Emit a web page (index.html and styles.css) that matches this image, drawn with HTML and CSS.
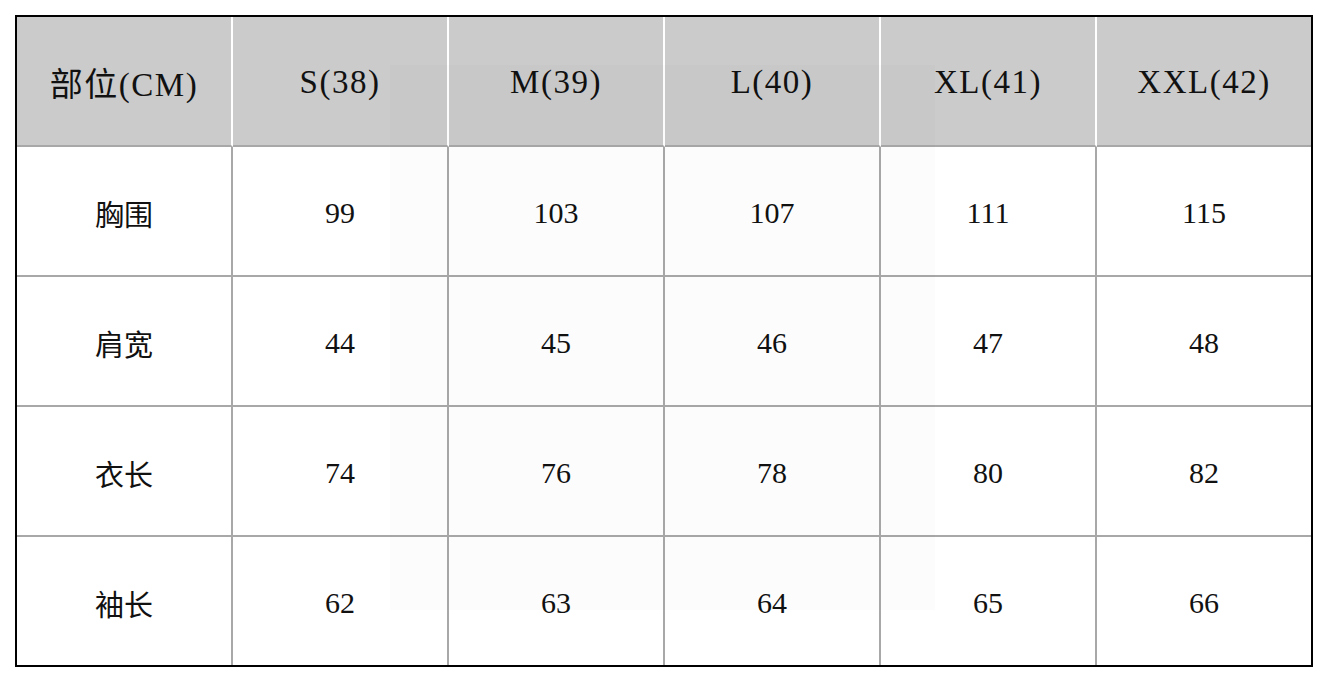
FILE: index.html
```html
<!DOCTYPE html>
<html lang="zh-CN">
<head>
<meta charset="utf-8">
<title>尺码表</title>
<link rel="stylesheet" href="styles.css">
</head>
<body>
<div class="sheet">
  <table class="size-table">
    <colgroup>
      <col class="c"><col class="c"><col class="c"><col class="c"><col class="c"><col class="c-last">
    </colgroup>
    <thead>
      <tr>
        <th>部位(CM)</th>
        <th>S(38)</th>
        <th>M(39)</th>
        <th>L(40)</th>
        <th>XL(41)</th>
        <th>XXL(42)</th>
      </tr>
    </thead>
    <tbody>
      <tr><td class="name">胸围</td><td>99</td><td>103</td><td>107</td><td>111</td><td>115</td></tr>
      <tr><td class="name">肩宽</td><td>44</td><td>45</td><td>46</td><td>47</td><td>48</td></tr>
      <tr><td class="name">衣长</td><td>74</td><td>76</td><td>78</td><td>80</td><td>82</td></tr>
      <tr><td class="name">袖长</td><td>62</td><td>63</td><td>64</td><td>65</td><td>66</td></tr>
    </tbody>
  </table>
  <div class="watermark"></div>
</div>
</body>
</html>
```

FILE: styles.css
```css
html, body {
  margin: 0;
  padding: 0;
  background: #ffffff;
}

body {
  padding: 15px;
}

.sheet {
  position: relative;
  width: 1298px;
}

.size-table {
  border-collapse: separate;
  border-spacing: 0;
  table-layout: fixed;
  width: 1298px;
  border: 2px solid #000000;
  font-family: "Liberation Serif", "Noto Sans CJK SC", serif;
  color: #111111;
}

.size-table col.c { width: 216px; }
.size-table col.c-last { width: 214px; }

.size-table th,
.size-table td {
  padding: 4px 0 0 0;
  text-align: center;
  vertical-align: middle;
  box-sizing: border-box;
}

.size-table th {
  height: 130px;
  background: #cbcbcb;
  border-right: 2px solid #ffffff;
  border-bottom: 2px solid #a8a8a8;
  font-weight: normal;
  font-size: 33px;
  letter-spacing: 1.5px;
  padding-top: 2px;
}

.size-table td {
  height: 130px;
  border-right: 2px solid #a8a8a8;
  border-bottom: 2px solid #a8a8a8;
  font-size: 30px;
}

.size-table td.name {
  font-family: "Noto Sans CJK SC", sans-serif;
  font-size: 29px;
}

.size-table th:last-child,
.size-table td:last-child {
  border-right: none;
}

.size-table tbody tr:last-child td {
  border-bottom: none;
  height: 128px;
}

.watermark {
  position: absolute;
  left: 375px;
  top: 50px;
  width: 545px;
  height: 545px;
  background: rgba(0, 0, 0, 0.01);
  pointer-events: none;
}
```
